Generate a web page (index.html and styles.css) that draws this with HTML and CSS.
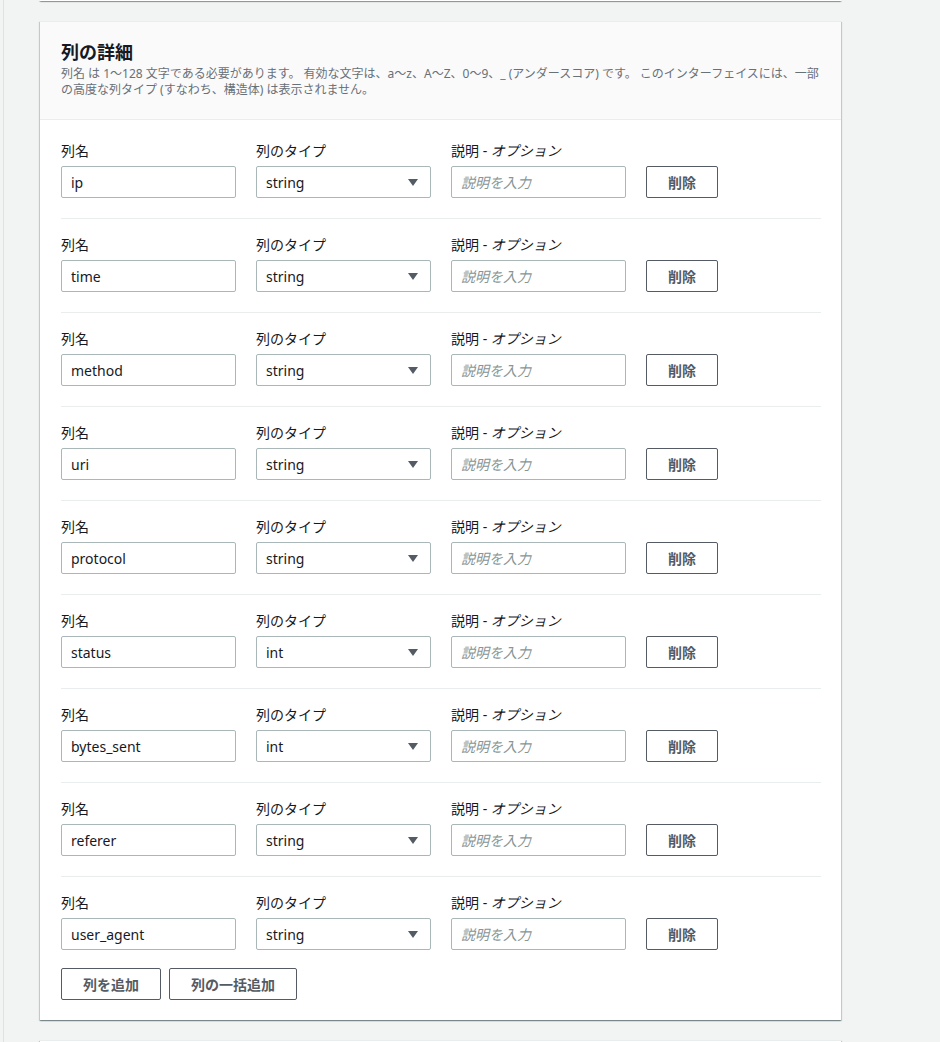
FILE: index.html
```html
<!DOCTYPE html>
<html lang="ja">
<head>
  <meta charset="UTF-8">
  <meta name="viewport" content="width=device-width, initial-scale=1.0">
  <title>列の詳細</title>
  <link rel="stylesheet" href="styles.css">
</head>
<body>
  <div class="side"></div>

  <div class="main">
    <div class="card card-prev"></div>

    <div class="card">
      <div class="card-header">
        <h2>列の詳細</h2>
        <p>列名 は 1〜128 文字である必要があります。 有効な文字は、a〜z、A〜Z、0〜9、_ (アンダースコア) です。 このインターフェイスには、一部の高度な列タイプ (すなわち、構造体) は表示されません。</p>
      </div>

      <div class="card-body" id="columns"></div>

      <div class="actions">
        <button class="btn">列を追加</button>
        <button class="btn">列の一括追加</button>
      </div>
    </div>

    <div class="card card-next"></div>
  </div>

  <script>
    const columns = [
      ['ip', 'string'],
      ['time', 'string'],
      ['method', 'string'],
      ['uri', 'string'],
      ['protocol', 'string'],
      ['status', 'int'],
      ['bytes_sent', 'int'],
      ['referer', 'string'],
      ['user_agent', 'string']
    ];

    const container = document.getElementById('columns');

    // Build one row per column definition
    columns.forEach(([name, type]) => {
      const row = document.createElement('div');
      row.className = 'row';
      row.innerHTML = `
        <div class="field">
          <label>列名</label>
          <input type="text" value="${name}">
        </div>
        <div class="field">
          <label>列のタイプ</label>
          <div class="select">
            <span>${type}</span>
            <svg width="10" height="7" viewBox="0 0 10 7"><path d="M0 0h10L5 7z" fill="#545b64"/></svg>
          </div>
        </div>
        <div class="field">
          <label>説明 - <i>オプション</i></label>
          <input type="text" placeholder="説明を入力">
        </div>
        <div class="field">
          <label>&nbsp;</label>
          <button class="btn">削除</button>
        </div>`;
      container.appendChild(row);
    });
  </script>
</body>
</html>
```

FILE: styles.css
```css
body {
  margin: 0;
  display: flex;
  background-color: #f2f3f3;
  font-family: "Noto Sans", "Noto Sans CJK JP", sans-serif;
  color: #16191f;
  min-height: 1042px;
}

.side {
  width: 3px;
  border-right: 1px solid #dfe2e2;
}

.main {
  margin-left: 36px;
  width: 801px;
}

.card {
  background-color: #fff;
  box-shadow: 0 1px 1px 0 rgba(0, 28, 36, 0.3), 1px 1px 1px 0 rgba(0, 28, 36, 0.15), -1px 1px 1px 0 rgba(0, 28, 36, 0.15);
  border-top: 1px solid #eaeded;
  margin-bottom: 20px;
}

.card-prev {
  height: 1px;
  border-top: none;
}

.card-next {
  height: 40px;
}

.card-header {
  background-color: #fafafa;
  border-bottom: 1px solid #eaeded;
  padding: 19px 20px 21px 21px;
}

.card-header h2 {
  margin: 0;
  font-size: 18px;
  line-height: 22px;
  font-weight: 700;
}

.card-header p {
  margin: 3px 0 0;
  font-size: 12px;
  line-height: 16px;
  color: #687078;
}

.card-body {
  padding: 5px 20px 0 21px;
}

.row {
  display: flex;
  gap: 20px;
  padding: 16px 0 20px;
  border-bottom: 1px solid #eaeded;
}

.row:last-child {
  border-bottom: none;
  padding-bottom: 18px;
}

.field label {
  display: block;
  font-size: 14px;
  line-height: 20px;
  margin-bottom: 5px;
}

.field input,
.select {
  box-sizing: border-box;
  width: 175px;
  height: 32px;
  border: 1px solid #aab7b8;
  border-radius: 2px;
  padding: 4px 9px;
  font-family: inherit;
  font-size: 14px;
  color: #16191f;
  background-color: #fff;
}

.field input::placeholder {
  color: #879596;
  font-style: italic;
}

.select {
  display: flex;
  align-items: center;
  justify-content: space-between;
  padding-right: 12px;
}

.btn {
  height: 32px;
  padding: 0 21px;
  background-color: #fff;
  border: 1px solid #545b64;
  border-radius: 2px;
  color: #545b64;
  font-family: inherit;
  font-size: 14px;
  font-weight: 700;
  cursor: pointer;
}

.actions {
  display: flex;
  gap: 8px;
  padding: 0 20px 20px 21px;
}
```
